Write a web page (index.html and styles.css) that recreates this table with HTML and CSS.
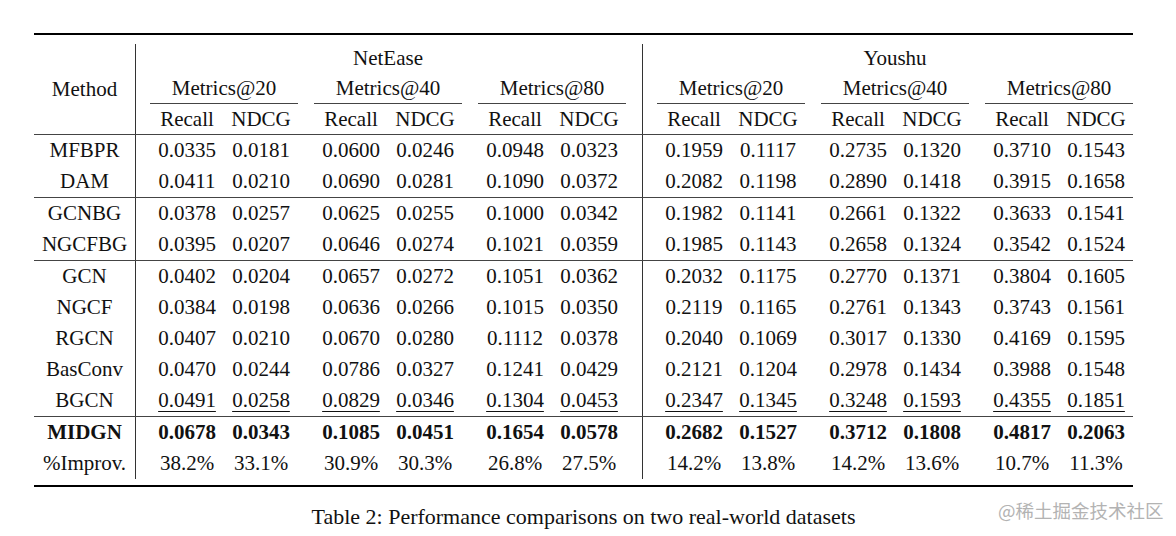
FILE: index.html
```html
<!DOCTYPE html>
<html>
<head>
<meta charset="utf-8">
<link rel="stylesheet" href="styles.css">
</head>
<body>
<div class="tbl">
  <div class="rule-top"></div>
  <div class="head">
    <div class="m mh">Method</div>
    <div class="sec n">
      <div class="ds">NetEase</div>
      <div class="groups">
        <div class="hg"><div class="mt">Metrics@20</div><div class="sub"><span class="c">Recall</span><span class="c">NDCG</span></div></div>
        <div class="hg"><div class="mt">Metrics@40</div><div class="sub"><span class="c">Recall</span><span class="c">NDCG</span></div></div>
        <div class="hg"><div class="mt">Metrics@80</div><div class="sub"><span class="c">Recall</span><span class="c">NDCG</span></div></div>
      </div>
    </div>
    <div class="sec y">
      <div class="ds">Youshu</div>
      <div class="groups">
        <div class="hg"><div class="mt">Metrics@20</div><div class="sub"><span class="c">Recall</span><span class="c">NDCG</span></div></div>
        <div class="hg"><div class="mt">Metrics@40</div><div class="sub"><span class="c">Recall</span><span class="c">NDCG</span></div></div>
        <div class="hg"><div class="mt">Metrics@80</div><div class="sub"><span class="c">Recall</span><span class="c">NDCG</span></div></div>
      </div>
    </div>
  </div>
  <div class="rule"></div>

  <div class="row"><div class="m">MFBPR</div>
    <div class="sec n"><div class="g"><span class="c">0.0335</span><span class="c">0.0181</span></div><div class="g"><span class="c">0.0600</span><span class="c">0.0246</span></div><div class="g"><span class="c">0.0948</span><span class="c">0.0323</span></div></div>
    <div class="sec y"><div class="g"><span class="c">0.1959</span><span class="c">0.1117</span></div><div class="g"><span class="c">0.2735</span><span class="c">0.1320</span></div><div class="g"><span class="c">0.3710</span><span class="c">0.1543</span></div></div>
  </div>
  <div class="row"><div class="m">DAM</div>
    <div class="sec n"><div class="g"><span class="c">0.0411</span><span class="c">0.0210</span></div><div class="g"><span class="c">0.0690</span><span class="c">0.0281</span></div><div class="g"><span class="c">0.1090</span><span class="c">0.0372</span></div></div>
    <div class="sec y"><div class="g"><span class="c">0.2082</span><span class="c">0.1198</span></div><div class="g"><span class="c">0.2890</span><span class="c">0.1418</span></div><div class="g"><span class="c">0.3915</span><span class="c">0.1658</span></div></div>
  </div>
  <div class="rule"></div>

  <div class="row"><div class="m">GCNBG</div>
    <div class="sec n"><div class="g"><span class="c">0.0378</span><span class="c">0.0257</span></div><div class="g"><span class="c">0.0625</span><span class="c">0.0255</span></div><div class="g"><span class="c">0.1000</span><span class="c">0.0342</span></div></div>
    <div class="sec y"><div class="g"><span class="c">0.1982</span><span class="c">0.1141</span></div><div class="g"><span class="c">0.2661</span><span class="c">0.1322</span></div><div class="g"><span class="c">0.3633</span><span class="c">0.1541</span></div></div>
  </div>
  <div class="row"><div class="m">NGCFBG</div>
    <div class="sec n"><div class="g"><span class="c">0.0395</span><span class="c">0.0207</span></div><div class="g"><span class="c">0.0646</span><span class="c">0.0274</span></div><div class="g"><span class="c">0.1021</span><span class="c">0.0359</span></div></div>
    <div class="sec y"><div class="g"><span class="c">0.1985</span><span class="c">0.1143</span></div><div class="g"><span class="c">0.2658</span><span class="c">0.1324</span></div><div class="g"><span class="c">0.3542</span><span class="c">0.1524</span></div></div>
  </div>
  <div class="rule"></div>

  <div class="row"><div class="m">GCN</div>
    <div class="sec n"><div class="g"><span class="c">0.0402</span><span class="c">0.0204</span></div><div class="g"><span class="c">0.0657</span><span class="c">0.0272</span></div><div class="g"><span class="c">0.1051</span><span class="c">0.0362</span></div></div>
    <div class="sec y"><div class="g"><span class="c">0.2032</span><span class="c">0.1175</span></div><div class="g"><span class="c">0.2770</span><span class="c">0.1371</span></div><div class="g"><span class="c">0.3804</span><span class="c">0.1605</span></div></div>
  </div>
  <div class="row"><div class="m">NGCF</div>
    <div class="sec n"><div class="g"><span class="c">0.0384</span><span class="c">0.0198</span></div><div class="g"><span class="c">0.0636</span><span class="c">0.0266</span></div><div class="g"><span class="c">0.1015</span><span class="c">0.0350</span></div></div>
    <div class="sec y"><div class="g"><span class="c">0.2119</span><span class="c">0.1165</span></div><div class="g"><span class="c">0.2761</span><span class="c">0.1343</span></div><div class="g"><span class="c">0.3743</span><span class="c">0.1561</span></div></div>
  </div>
  <div class="row"><div class="m">RGCN</div>
    <div class="sec n"><div class="g"><span class="c">0.0407</span><span class="c">0.0210</span></div><div class="g"><span class="c">0.0670</span><span class="c">0.0280</span></div><div class="g"><span class="c">0.1112</span><span class="c">0.0378</span></div></div>
    <div class="sec y"><div class="g"><span class="c">0.2040</span><span class="c">0.1069</span></div><div class="g"><span class="c">0.3017</span><span class="c">0.1330</span></div><div class="g"><span class="c">0.4169</span><span class="c">0.1595</span></div></div>
  </div>
  <div class="row"><div class="m">BasConv</div>
    <div class="sec n"><div class="g"><span class="c">0.0470</span><span class="c">0.0244</span></div><div class="g"><span class="c">0.0786</span><span class="c">0.0327</span></div><div class="g"><span class="c">0.1241</span><span class="c">0.0429</span></div></div>
    <div class="sec y"><div class="g"><span class="c">0.2121</span><span class="c">0.1204</span></div><div class="g"><span class="c">0.2978</span><span class="c">0.1434</span></div><div class="g"><span class="c">0.3988</span><span class="c">0.1548</span></div></div>
  </div>
  <div class="row ul"><div class="m">BGCN</div>
    <div class="sec n"><div class="g"><span class="c"><u>0.0491</u></span><span class="c"><u>0.0258</u></span></div><div class="g"><span class="c"><u>0.0829</u></span><span class="c"><u>0.0346</u></span></div><div class="g"><span class="c"><u>0.1304</u></span><span class="c"><u>0.0453</u></span></div></div>
    <div class="sec y"><div class="g"><span class="c"><u>0.2347</u></span><span class="c"><u>0.1345</u></span></div><div class="g"><span class="c"><u>0.3248</u></span><span class="c"><u>0.1593</u></span></div><div class="g"><span class="c"><u>0.4355</u></span><span class="c"><u>0.1851</u></span></div></div>
  </div>
  <div class="rule"></div>

  <div class="row bold"><div class="m">MIDGN</div>
    <div class="sec n"><div class="g"><span class="c">0.0678</span><span class="c">0.0343</span></div><div class="g"><span class="c">0.1085</span><span class="c">0.0451</span></div><div class="g"><span class="c">0.1654</span><span class="c">0.0578</span></div></div>
    <div class="sec y"><div class="g"><span class="c">0.2682</span><span class="c">0.1527</span></div><div class="g"><span class="c">0.3712</span><span class="c">0.1808</span></div><div class="g"><span class="c">0.4817</span><span class="c">0.2063</span></div></div>
  </div>
  <div class="row"><div class="m">%Improv.</div>
    <div class="sec n"><div class="g"><span class="c">38.2%</span><span class="c">33.1%</span></div><div class="g"><span class="c">30.9%</span><span class="c">30.3%</span></div><div class="g"><span class="c">26.8%</span><span class="c">27.5%</span></div></div>
    <div class="sec y"><div class="g"><span class="c">14.2%</span><span class="c">13.8%</span></div><div class="g"><span class="c">14.2%</span><span class="c">13.6%</span></div><div class="g"><span class="c">10.7%</span><span class="c">11.3%</span></div></div>
  </div>
  <div class="rule-bot"></div>
  <div class="cap">Table 2: Performance comparisons on two real-world datasets</div>
</div>
<div class="wm">@稀土掘金技术社区</div>
</body>
</html>
```
FILE: styles.css
```css
html, body {
  margin: 0;
  padding: 0;
  background: #fff;
}
body {
  position: relative;
  width: 1176px;
  height: 536px;
  overflow: hidden;
  font-family: "Liberation Serif", "Times New Roman", serif;
  font-size: 21px;
  color: #111;
}
.tbl {
  width: 1099px;
  margin: 33px 0 0 34px;
}
.rule-top {
  height: 2px;
  background: #000;
  margin-bottom: 9px;
}
.rule-bot {
  height: 2px;
  background: #000;
  margin-top: 6px;
}
.rule {
  height: 1px;
  background: #444;
}
.head {
  display: flex;
  height: 90px;
}
.m {
  width: 101px;
  flex: none;
  border-right: 1px solid #333;
  text-align: center;
  white-space: nowrap;
}
.mh {
  display: flex;
  align-items: center;
  justify-content: center;
}
.sec {
  display: flex;
  gap: 16px;
  padding: 0 0 0 14px;
}
.sec.n {
  padding-right: 16px;
  border-right: 1px solid #333;
}
.head .sec {
  flex-direction: column;
  gap: 0;
}
.ds {
  height: 29px;
  line-height: 29px;
  text-align: center;
}
.groups {
  display: flex;
  gap: 16px;
}
.hg {
  width: 148px;
  display: flex;
  flex-direction: column;
}
.mt {
  height: 30px;
  line-height: 30px;
  text-align: center;
  border-bottom: 1px solid #444;
}
.sub {
  display: flex;
  height: 30px;
  line-height: 30px;
}
.row {
  display: flex;
  height: 31px;
  line-height: 31px;
}
.g {
  display: flex;
}
.c {
  width: 74px;
  text-align: center;
  white-space: nowrap;
}
.bold {
  font-weight: bold;
}
.ul u {
  text-decoration: underline;
  text-decoration-thickness: 1px;
  text-underline-offset: 4px;
}
.cap {
  margin-top: 18px;
  height: 24px;
  line-height: 24px;
  font-size: 22px;
  text-align: center;
}
.wm {
  position: absolute;
  left: 998px;
  top: 497px;
  font-family: "Noto Sans CJK SC", "Noto Sans", sans-serif;
  font-size: 18.5px;
  line-height: 26px;
  letter-spacing: 0;
  color: #b3b3b3;
  white-space: nowrap;
}
```
